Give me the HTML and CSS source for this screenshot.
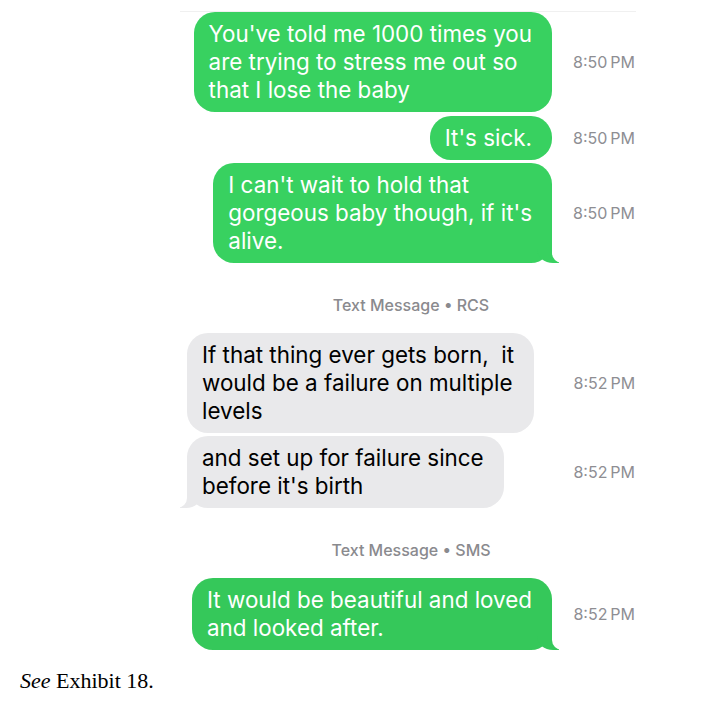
FILE: index.html
```
<!DOCTYPE html>
<html lang="en">
<head>
    <meta charset="UTF-8">
    <meta name="viewport" content="width=device-width, initial-scale=1.0">
    <title>Exhibit 17</title>
    <link rel="stylesheet" href="styles.css">
</head>
<body>
    <!-- Screenshot of the thread -->
    <div class="thread">
        <div class="row sent">
            <div class="bubble green">You've told me 1000 times you<br>are trying to stress me out so<br>that I lose the baby</div>
            <div class="time">8:50&#8201;PM</div>
        </div>
        <div class="row sent">
            <div class="bubble green">It's sick.</div>
            <div class="time">8:50&#8201;PM</div>
        </div>
        <div class="row sent">
            <div class="bubble green tail">I can't wait to hold that<br>gorgeous baby though, if it's<br>alive.</div>
            <div class="time">8:50&#8201;PM</div>
        </div>

        <div class="label">Text Message &bull; RCS</div>

        <div class="row received">
            <div class="bubble gray">If that thing ever gets born,&nbsp; it<br>would be a failure on multiple<br>levels</div>
            <div class="time">8:52&#8201;PM</div>
        </div>
        <div class="row received">
            <div class="bubble gray tail">and set up for failure since<br>before it's birth</div>
            <div class="time">8:52&#8201;PM</div>
        </div>

        <div class="label">Text Message &bull; SMS</div>

        <div class="row sent">
            <div class="bubble green sms tail">It would be beautiful and loved<br>and looked after.</div>
            <div class="time">8:52&#8201;PM</div>
        </div>
    </div>

    <p class="caption"><em>See</em> Exhibit 18.</p>
</body>
</html>
```

FILE: styles.css
```
/* General */
body, html {
    margin: 0;
    padding: 0;
    background: #fff;
}

/* Thread */
.thread {
    width: 456px;
    margin: 11px 0 0 180px;
    border-top: 1px solid #f0f0f0;
    font-family: Inter, "Liberation Sans", sans-serif;
}
.row {
    display: flex;
    align-items: center;
    margin-top: 3px;
}
.row:first-child {
    margin-top: 0;
}
.row:nth-child(2) {
    margin-top: 4px;
}
.row.sent .bubble {
    margin-left: auto;
}
.row.received .bubble {
    margin-left: 7px;
    margin-right: auto;
}
.time {
    width: 84px;
    flex-shrink: 0;
    text-align: right;
    font-size: 16px;
    color: #8e8e93;
    padding-right: 1px;
    box-sizing: border-box;
}
.row.received .time {
    width: 102px;
}

/* Bubbles */
.bubble {
    position: relative;
    padding: 8px 20px 8px 15px;
    border-radius: 21px;
    font-size: 22.4px;
    line-height: 28px;
    white-space: nowrap;
}
.green {
    background: #38d160;
    color: #fff;
}
.green.sms {
    background: #35c85a;
}
.gray {
    background: #e9e9eb;
    color: #000;
}

/* Tails */
.bubble.tail::before,
.bubble.tail::after {
    content: "";
    position: absolute;
    bottom: 0;
    height: 22px;
}
.green.tail::before {
    right: -7px;
    width: 22px;
    background: inherit;
    border-bottom-left-radius: 16px 14px;
}
.green.tail::after {
    right: -26px;
    width: 26px;
    background: #fff;
    border-bottom-left-radius: 10px;
}
.gray.tail::before {
    left: -7px;
    width: 22px;
    background: #e9e9eb;
    border-bottom-right-radius: 16px 14px;
}
.gray.tail::after {
    left: -26px;
    width: 26px;
    background: #fff;
    border-bottom-right-radius: 10px;
}

/* Service label */
.label {
    margin: 32px 0 18px;
    text-align: center;
    font-size: 16px;
    line-height: 20px;
    font-weight: 500;
    color: #8a8a8e;
    padding-left: 6px;
}

/* Caption */
.caption {
    margin: 18px 0 0 20px;
    font-family: "Liberation Serif", "Times New Roman", serif;
    font-size: 22px;
}
```
